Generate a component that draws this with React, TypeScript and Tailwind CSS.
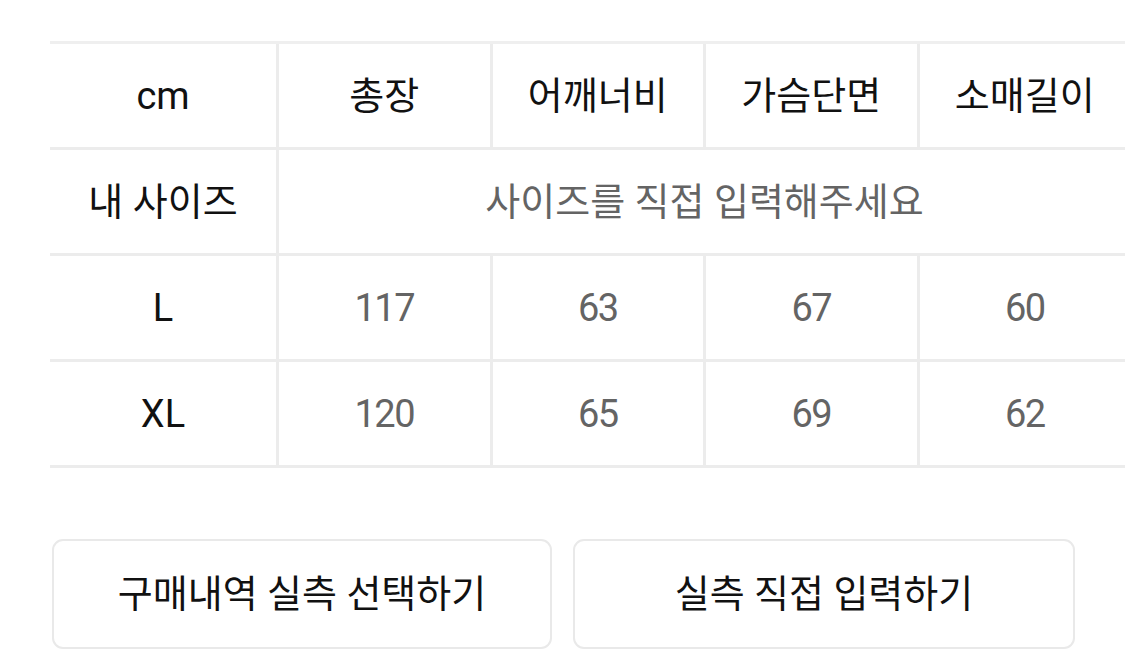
const headers = ["총장", "어깨너비", "가슴단면", "소매길이"];

const sizes = [
  { name: "L", values: ["117", "63", "67", "60"] },
  { name: "XL", values: ["120", "65", "69", "62"] },
];

function Cell({ children, first, muted }: { children: React.ReactNode; first?: boolean; muted?: boolean }) {
  return (
    <div
      className={
        (first ? "w-[226px] shrink-0 " : "w-[213.5px] shrink-0 border-l-[3px] border-[#ececec] ") +
        "flex items-center justify-center " +
        (muted ? "text-[#646464] tracking-[-1.5px]" : "text-[#111111]")
      }
    >
      {children}
    </div>
  );
}

export default function App() {
  return (
    <div
      className="w-[1125px] h-[660px] overflow-hidden bg-white"
      style={{ fontFamily: 'Roboto, "Noto Sans CJK KR", sans-serif' }}
    >
      <div className="ml-[50px] mt-[41px] w-[1080px] border-t-[3px] border-[#efefef] text-[38px] leading-none">
        {/* header */}
        <div className="flex h-[106px] border-b-[3px] border-[#ececec]">
          <Cell first>cm</Cell>
          {headers.map((h) => (
            <Cell key={h}>{h}</Cell>
          ))}
        </div>

        {/* my size */}
        <div className="flex h-[106px] border-b-[3px] border-[#ececec]">
          <Cell first>내 사이즈</Cell>
          <div className="flex-1 border-l-[3px] border-[#ececec] flex items-center justify-center text-[#646464]">
            사이즈를 직접 입력해주세요
          </div>
        </div>

        {sizes.map((s) => (
          <div key={s.name} className="flex h-[106px] border-b-[3px] border-[#ececec]">
            <Cell first>{s.name}</Cell>
            {s.values.map((v, i) => (
              <Cell key={i} muted>
                {v}
              </Cell>
            ))}
          </div>
        ))}
      </div>

      <div className="flex gap-[21px] ml-[52px] mt-[71px]">
        <button className="w-[500px] h-[110px] rounded-[11px] border-2 border-[#e9e9e9] bg-white text-[38px] leading-none text-[#111111] flex items-center justify-center">
          구매내역 실측 선택하기
        </button>
        <button className="w-[502px] h-[110px] rounded-[11px] border-2 border-[#e9e9e9] bg-white text-[38px] leading-none text-[#111111] flex items-center justify-center">
          실측 직접 입력하기
        </button>
      </div>
    </div>
  );
}
